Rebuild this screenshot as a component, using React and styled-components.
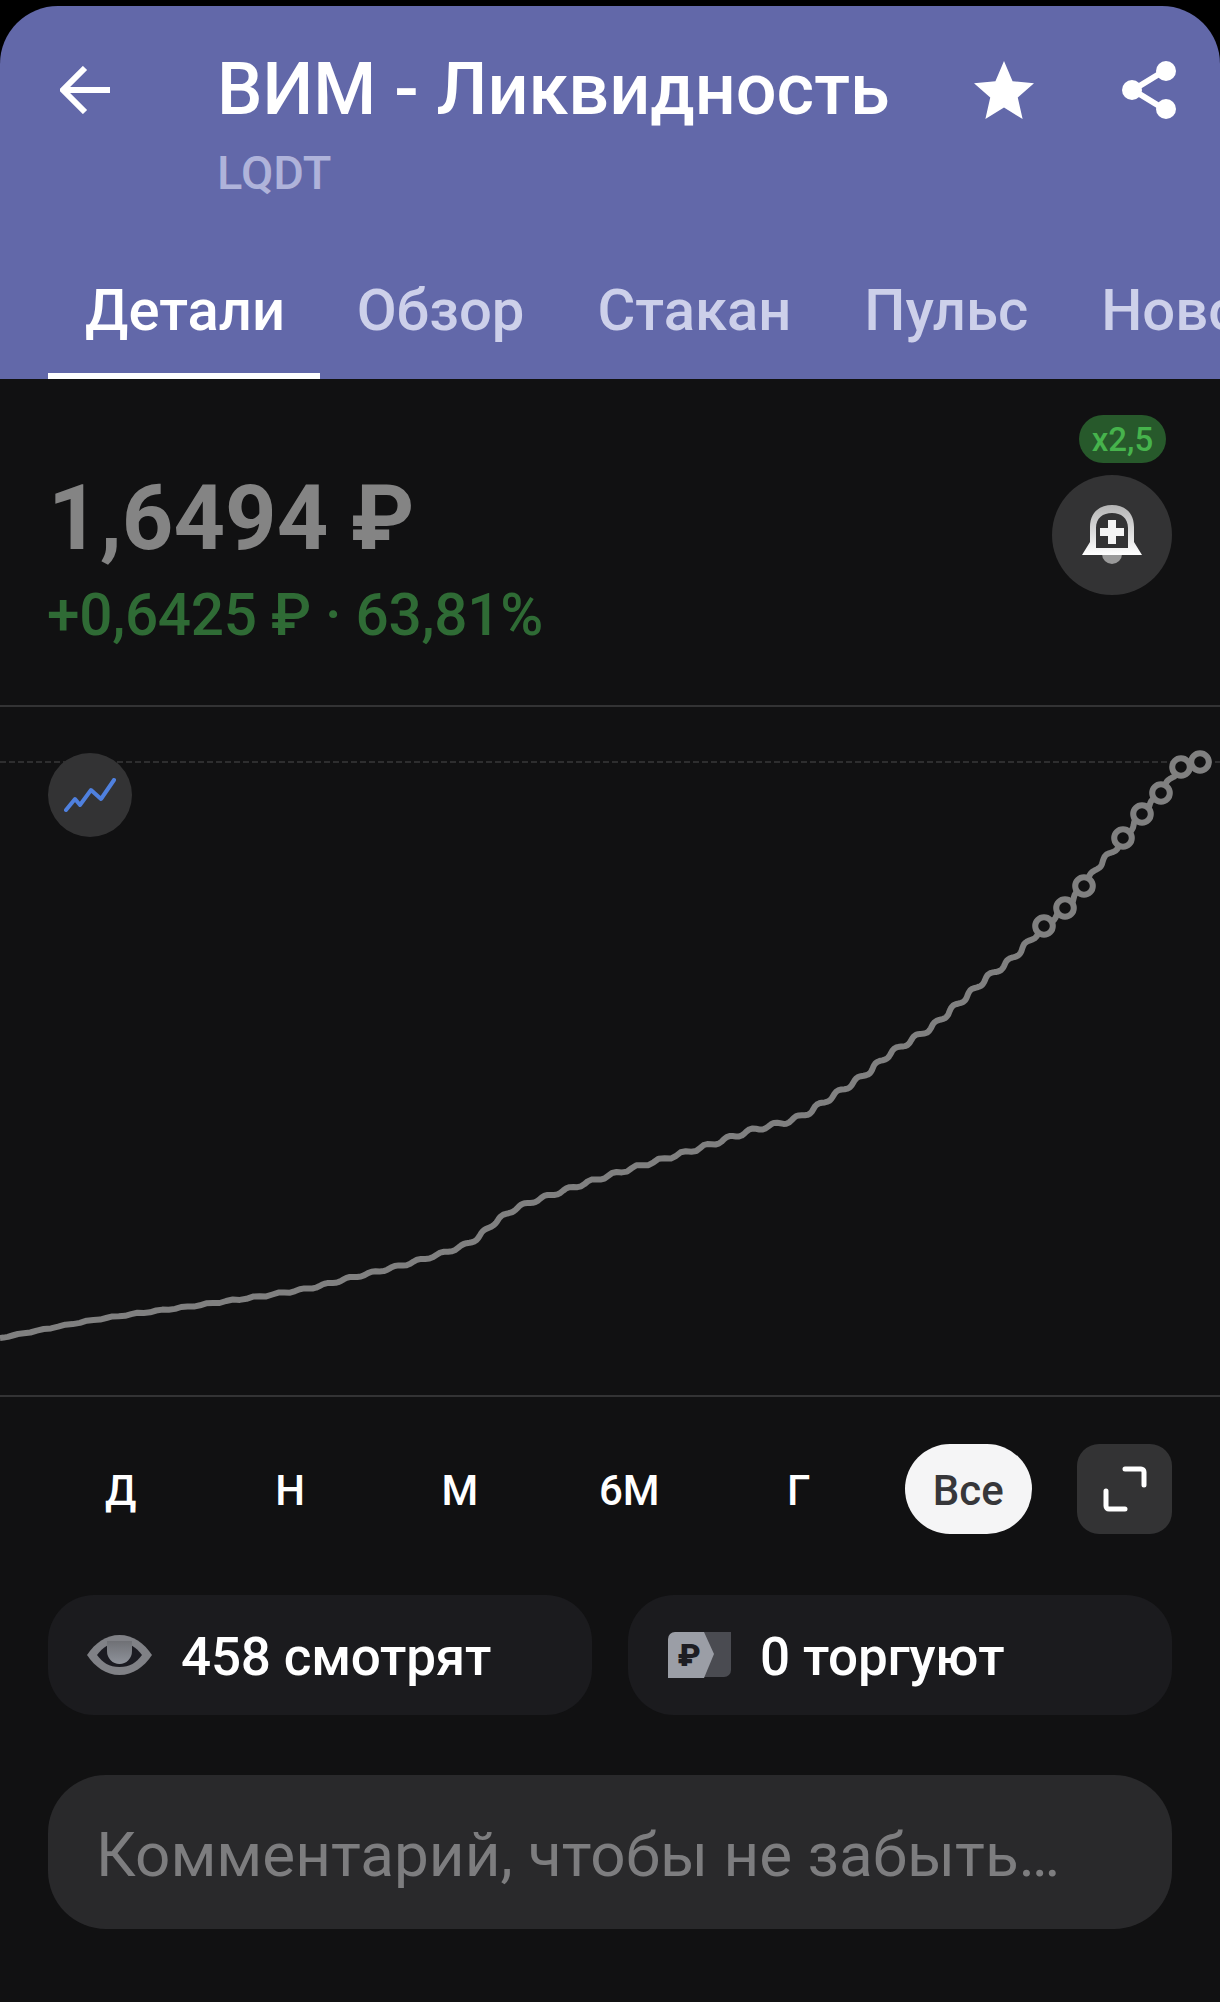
import React from "react";
import styled, { createGlobalStyle } from "styled-components";

const Global = createGlobalStyle`
  html, body { margin: 0; padding: 0; background: #000; }
  body { font-family: Roboto, "Noto Sans", sans-serif; }
  * { box-sizing: border-box; }
`;

const Page = styled.div`
  width: 1220px;
  height: 2002px;
  overflow: hidden;
  background: #000;
  padding-top: 6px;
`;
const Header = styled.header`
  height: 373px;
  background: #6268a9;
  border-radius: 58px 58px 0 0;
  display: flex;
  flex-direction: column;
`;
const TitleRow = styled.div`
  display: flex;
  align-items: center;
  height: 60px;
  margin-top: 54px;
  padding-left: 60px;
`;
const BackSlot = styled.div`
  width: 157px;
  display: flex;
`;
const Title = styled.h1`
  margin: 0;
  width: 757px;
  font-size: 72px;
  line-height: 60px;
  font-weight: 500;
  color: #fff;
  white-space: nowrap;
`;
const ActionSlot = styled.div`
  width: ${(p) => p.$w}px;
  display: flex;
`;
const Ticker = styled.div`
  margin: 26px 0 0 217px;
  font-size: 47px;
  line-height: 54px;
  font-weight: 500;
  color: #afb3da;
`;
const Tabs = styled.nav`
  margin-top: auto;
  padding-left: 48px;
  display: flex;
  overflow: hidden;
  white-space: nowrap;
`;
const Tab = styled.div`
  padding: 0 36.500px;
  height: 109px;
  font-size: 58px;
  line-height: 80px;
  font-weight: 500;
  color: ${(p) => (p.$active ? "#fff" : "#cdd0ea")};
  border-bottom: 6px solid ${(p) => (p.$active ? "#fff" : "transparent")};
  flex: none;
  &:first-child {
    padding: 0 35px 0 37px;
  }
`;
const Main = styled.main`
  height: 1623px;
  background: #111112;
  padding-top: 0;
`;
const PriceBlock = styled.section`
  height: 326px;
  padding: 36px 48px 0;
  display: flex;
  justify-content: space-between;
`;
const PriceColumn = styled.div`
  display: flex;
  flex-direction: column;
`;
const Price = styled.div`
  font-size: 90px;
  line-height: 100px;
  margin-top: 54px;
  font-weight: 700;
  color: #848484;
  white-space: nowrap;
`;
const Change = styled.div`
  font-size: 58.500px;
  line-height: 70px;
  margin-top: 11px;
  margin-left: -1px;
  font-weight: 500;
  letter-spacing: -0.3px;
  color: #2f6b35;
  white-space: nowrap;
`;
const AlertColumn = styled.div`
  display: flex;
  flex-direction: column;
  align-items: center;
  width: 120px;
`;
const Badge = styled.div`
  width: 87px;
  height: 48px;
  align-self: flex-end;
  margin-right: 6px;
  border-radius: 24px;
  background: #27592b;
  color: #46b34c;
  font-size: 33px;
  line-height: 50px;
  font-weight: 500;
  text-align: center;
`;
const RoundButton = styled.div`
  width: 120px;
  height: 120px;
  margin-top: 12px;
  border-radius: 50%;
  background: #333334;
  display: flex;
  align-items: center;
  justify-content: center;
`;
const ChartBox = styled.section`
  position: relative;
  height: 692px;
  border-top: 2px solid #333334;
  border-bottom: 2px solid #333334;
`;
const ChartSvg = styled.svg`
  display: block;
  width: 1220px;
  height: 688px;
`;
const ChartToggle = styled.div`
  position: absolute;
  left: 48px;
  top: 46px;
  width: 84px;
  height: 84px;
  border-radius: 50%;
  background: #333334;
  display: flex;
  align-items: center;
  justify-content: center;
`;
const Periods = styled.div`
  display: flex;
  align-items: center;
  height: 90px;
  margin-top: 47px;
  padding: 0 48px 0 36px;
`;
const Period = styled.div`
  width: 169.500px;
  display: flex;
  justify-content: center;
`;
const PeriodLabel = styled.div`
  height: 90px;
  padding: 0 ${(p) => (p.$active ? "28px" : "0")};
  border-radius: 45px;
  background: ${(p) => (p.$active ? "#f5f5f6" : "transparent")};
  color: ${(p) => (p.$active ? "#37373a" : "#fff")};
  font-size: 42px;
  line-height: 94px;
  font-weight: 500;
`;
const ExpandButton = styled.div`
  width: 95px;
  height: 90px;
  margin-left: auto;
  border-radius: 22px;
  background: #333334;
  display: flex;
  align-items: center;
  justify-content: center;
`;
const Stats = styled.div`
  display: grid;
  grid-template-columns: 1fr 1fr;
  gap: 36px;
  margin: 61px 48px 0;
`;
const StatCard = styled.div`
  height: 120px;
  border-radius: 46px;
  background: #1b1b1e;
  display: flex;
  align-items: center;
  gap: ${(p) => p.$gap}px;
  padding-left: ${(p) => p.$pad}px;
`;
const StatText = styled.div`
  font-size: 53px;
  line-height: 66px;
  padding-top: 4px;
  font-weight: 500;
  letter-spacing: -0.2px;
  color: #fff;
  white-space: nowrap;
`;
const Comment = styled.div`
  height: 154px;
  margin: 60px 48px 0;
  padding-left: 48px;
  border-radius: 58px;
  background: #29292b;
  color: #7d7d7f;
  font-size: 62px;
  line-height: 160px;
  white-space: nowrap;
`;

const anchors = [
  [0, 1337], [100, 1318], [200, 1304], [300, 1289], [350, 1277], [410, 1262], [467, 1243],
  [493, 1223], [517, 1207], [557, 1192], [617, 1172], [700, 1147], [750, 1130], [797, 1117],
  [833, 1095], [867, 1072], [887, 1055], [910, 1040], [933, 1025], [950, 1010], [967, 995],
  [987, 977], [1007, 962], [1023, 947], [1044, 925], [1065, 907], [1084, 885], [1100, 863],
  [1113, 850], [1123, 837], [1142, 813], [1161, 792], [1181, 766], [1200, 761],
];
const rings = anchors.filter(([x]) => [1044, 1065, 1084, 1123, 1142, 1161, 1181, 1200].includes(x));

function wavyPath() {
  const s = [];
  for (let i = 0; i < anchors.length - 1; i++) {
    const p0 = anchors[Math.max(i - 1, 0)];
    const p1 = anchors[i];
    const p2 = anchors[i + 1];
    const p3 = anchors[Math.min(i + 2, anchors.length - 1)];
    for (let k = 0; k < 16; k++) {
      const t = k / 16;
      const f = (a, b, c, d) =>
        0.5 * (2 * b + (c - a) * t + (2 * a - 5 * b + 4 * c - d) * t * t + (3 * b - a - 3 * c + d) * t * t * t);
      s.push([f(p0[0], p1[0], p2[0], p3[0]), f(p0[1], p1[1], p2[1], p3[1])]);
    }
  }
  s.push(anchors[anchors.length - 1]);
  let len = 0;
  const out = [];
  s.forEach((p, i) => {
    const q = s[Math.min(i + 1, s.length - 1)];
    const r = s[Math.max(i - 1, 0)];
    const dx = q[0] - r[0];
    const dy = q[1] - r[1];
    const n = Math.hypot(dx, dy) || 1;
    if (i > 0) len += Math.hypot(p[0] - s[i - 1][0], p[1] - s[i - 1][1]);
    const amp = 0.4 + 1.6 * Math.min(1, p[0] / 800);
    const w = amp * Math.sin((len / 24) * Math.PI * 2);
    out.push(`${(p[0] - (dy / n) * w).toFixed(1)} ${(p[1] + (dx / n) * w).toFixed(1)}`);
  });
  return "M" + out.join("L");
}

const ArrowIcon = () => (
  <svg width="50" height="48" viewBox="0 0 50 48" fill="none" stroke="#fff" strokeWidth="6">
    <path d="M50 24H4M25 2 3 24l22 22" />
  </svg>
);
const StarIcon = () => (
  <svg width="60" height="58" viewBox="0 0 58 56" fill="#fff">
    <path d="M29 0l8.300 19.600L58 21.400 42.300 35.200 47 56 29 45 11 56l4.700-20.800L0 21.400l20.700-1.800z" />
  </svg>
);
const ShareIcon = () => (
  <svg width="56" height="60" viewBox="0 0 56 60" fill="#fff" stroke="#fff">
    <path d="M43 11 12 30l31 19" fill="none" strokeWidth="6" />
    <circle cx="45" cy="11" r="10" stroke="none" />
    <circle cx="11" cy="30" r="10" stroke="none" />
    <circle cx="45" cy="49" r="10" stroke="none" />
  </svg>
);
const BellIcon = () => (
  <svg width="60" height="62" viewBox="0 0 60 62">
    <defs>
      <linearGradient id="bellFill" x1="0" y1="0" x2="0" y2="1">
        <stop offset="0" stopColor="#b4b4b4" />
        <stop offset="1" stopColor="#fff" />
      </linearGradient>
    </defs>
    <path d="M20 50h20a10 10 0 0 1-20 0z" fill="#9a9a9a" />
    <path
      fillRule="evenodd"
      fill="url(#bellFill)"
      d="M0 51 8 38V23C8 8 18 1 30 1s22 7 22 22v15l8 13zM14 44h32V24C46 14 39 9 30 9s-16 5-16 15z"
    />
    <path d="M26 16h8v8h8v8h-8v8h-8v-8h-8v-8h8z" fill="#f4f4f4" />
  </svg>
);
const TrendIcon = () => (
  <svg width="52" height="34" viewBox="0 0 52 34" fill="none" stroke="#4f80de" strokeWidth="4" strokeLinejoin="round" strokeLinecap="round">
    <path d="M2 32 11 21l5 6L27 12l10 9L50 2" />
  </svg>
);
const ExpandIcon = () => (
  <svg width="44" height="46" viewBox="0 0 44 46" fill="none" stroke="#fff" strokeWidth="5" strokeLinecap="round">
    <path d="M22 3h16a3 3 0 0 1 3 3v13M3 25v15a3 3 0 0 0 3 3h16" />
  </svg>
);
const EyeIcon = () => (
  <svg width="65" height="40" viewBox="0 0 65 40">
    <defs>
      <linearGradient id="iris" x1="0" y1="0" x2="0" y2="1">
        <stop offset="0" stopColor="#6f7075" />
        <stop offset="1" stopColor="#8f939b" />
      </linearGradient>
    </defs>
    <path d="M0 20C8 8 19 0 32.500 0S57 8 65 20C57 32 46 40 32.500 40S8 32 0 20z" fill="#808186" />
    <path d="M10 20C16 12 22 8 32.500 8S49 12 55 20C49 28 43 32 32.500 32S16 28 10 20z" fill="#1b1b22" />
    <path d="M20 6h25v10a12.500 13 0 0 1-25 0z" fill="url(#iris)" />
  </svg>
);
const RubleTag = styled.svg`
  font-family: Roboto, sans-serif;
  font-weight: 900;
  font-size: 32px;
`;
const RubleIcon = () => (
  <RubleTag width="63" height="46" viewBox="0 0 63 46">
    <path d="M20 0h43v38a7 7 0 0 1-7 7H20z" fill="#4a4b51" />
    <path d="M7 0h29l10 22-10 24H0V7a7 7 0 0 1 7-7z" fill="#9b9ea6" />
    <text x="21" y="34" textAnchor="middle" fill="#1d1d22">₽</text>
  </RubleTag>
);

const periods = ["Д", "Н", "М", "6М", "Г", "Все"];
const tabs = ["Детали", "Обзор", "Стакан", "Пульс", "Новости"];

export default function App() {
  return (
    <Page>
      <Global />
      <Header>
        <TitleRow>
          <BackSlot><ArrowIcon /></BackSlot>
          <Title>ВИМ - Ликвидность</Title>
          <ActionSlot $w={147}><StarIcon /></ActionSlot>
          <ActionSlot $w={56}><ShareIcon /></ActionSlot>
        </TitleRow>
        <Ticker>LQDT</Ticker>
        <Tabs>
          {tabs.map((t, i) => (
            <Tab key={t} $active={i === 0}>{t}</Tab>
          ))}
        </Tabs>
      </Header>
      <Main>
        <PriceBlock>
          <PriceColumn>
            <Price>1,6494 ₽</Price>
            <Change>+0,6425 ₽ · 63,81%</Change>
          </PriceColumn>
          <AlertColumn>
            <Badge>x2,5</Badge>
            <RoundButton><BellIcon /></RoundButton>
          </AlertColumn>
        </PriceBlock>
        <ChartBox>
          <ChartSvg viewBox="0 706 1220 688">
            <line x1="0" x2="1220" y1="761" y2="761" stroke="#2e2e2f" strokeWidth="2" strokeDasharray="6 3" />
            <path d={wavyPath()} fill="none" stroke="#808080" strokeWidth="6" strokeLinejoin="round" />
            {rings.map(([x, y]) => (
              <circle key={x} cx={x} cy={y} r="8.800" fill="#111112" stroke="#808080" strokeWidth="6" />
            ))}
          </ChartSvg>
          <ChartToggle><TrendIcon /></ChartToggle>
        </ChartBox>
        <Periods>
          {periods.map((p) => (
            <Period key={p}>
              <PeriodLabel $active={p === "Все"}>{p}</PeriodLabel>
            </Period>
          ))}
          <ExpandButton><ExpandIcon /></ExpandButton>
        </Periods>
        <Stats>
          <StatCard $pad={39} $gap={29}>
            <EyeIcon />
            <StatText>458 смотрят</StatText>
          </StatCard>
          <StatCard $pad={40} $gap={29}>
            <RubleIcon />
            <StatText>0 торгуют</StatText>
          </StatCard>
        </Stats>
        <Comment>Комментарий, чтобы не забыть…</Comment>
      </Main>
    </Page>
  );
}
